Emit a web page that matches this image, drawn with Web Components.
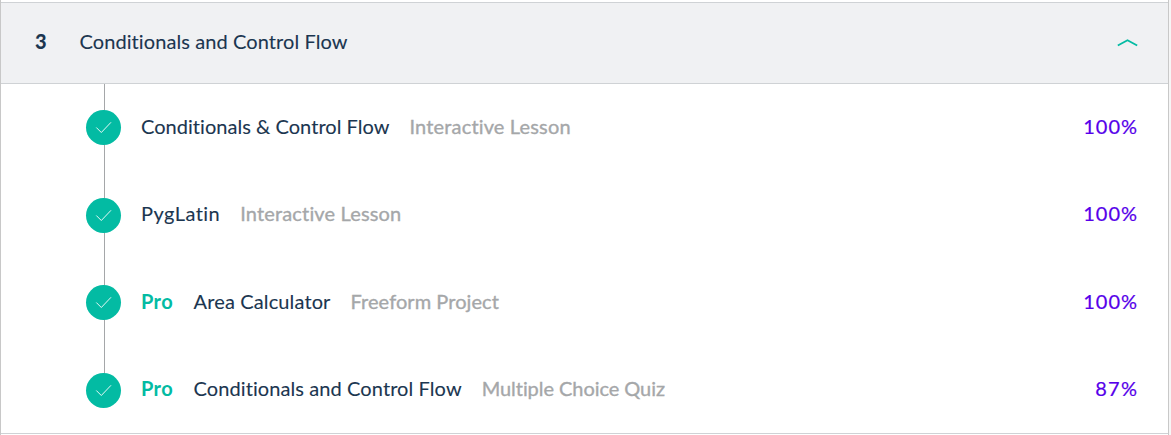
<!DOCTYPE html>
<html lang="en">
<head>
<meta charset="utf-8">
<title>Conditionals and Control Flow</title>
<style>
html,body{margin:0;height:100%;overflow:hidden}
body{background:#f6f6f6;font:20px/26px Lato,"Open Sans",sans-serif;font-variant-ligatures:none;color:#1b3650}
</style>
</head>
<body>
<course-module number="3" heading="Conditionals and Control Flow">
  <lesson-row name="Conditionals &amp; Control Flow" kind="Interactive Lesson" score="100%"></lesson-row>
  <lesson-row style="--name-track:.46px" name="PygLatin" kind="Interactive Lesson" score="100%"></lesson-row>
  <lesson-row style="--name-track:.13px;--kind-track:.07px" pro name="Area Calculator" kind="Freeform Project" score="100%"></lesson-row>
  <lesson-row style="--name-track:.09px;--kind-track:-.06px" pro last name="Conditionals and Control Flow" kind="Multiple Choice Quiz" score="87%"></lesson-row>
</course-module>
<script>
customElements.define('course-module', class extends HTMLElement {
  constructor() {
    super();
    this.attachShadow({mode: 'open'}).innerHTML = `
<style>
:host{display:block;box-sizing:border-box;width:1169px;height:435px;padding-top:2px;background:#fff;border:solid #c8c8c8;border-width:0 1px}
header{display:flex;align-items:center;box-sizing:border-box;height:82px;padding:0 30px 4px 34px;background:#f0f1f3;border:solid #cfd2d5;border-width:1px 0}
b{width:44.5px;font-weight:900}
span{letter-spacing:.09px;-webkit-text-stroke:.1px}
svg{margin-left:auto;margin-top:3px}
section{height:349px;border-bottom:1px solid #cfd2d5}
</style>
<header><b></b><span></span><svg width="21" height="9" fill="none" stroke="#03bba3" stroke-width="1.8"><path d="M.8 7.5 10.5 2.2l9.7 5.3"/></svg></header>
<section><slot></slot></section>`;
  }
  connectedCallback() {
    this.shadowRoot.querySelector('b').textContent = this.getAttribute('number');
    this.shadowRoot.querySelector('span').textContent = this.getAttribute('heading');
  }
});
customElements.define('lesson-row', class extends HTMLElement {
  constructor() {
    super();
    this.attachShadow({mode: 'open'}).innerHTML = `
<style>
:host{display:flex;box-sizing:border-box;height:87.5px;padding:0 31px 0 85px;align-items:center;background:linear-gradient(#a5a7a9,#a5a7a9) 103px 0/1px 100% no-repeat}
:host([last]){background-size:1px 50%}
i{display:block;width:35px;height:35px;border-radius:50%;background:#03bba3;margin-right:20px}
svg{display:block}
span{padding-bottom:4px;-webkit-text-stroke:.1px}
.pro{color:#03bba3;font-weight:700;margin-right:20.5px;letter-spacing:.4px;-webkit-text-stroke:0}
.name{letter-spacing:var(--name-track,.04px)}
.kind{color:#a5a7a9;margin-left:20px;letter-spacing:var(--kind-track,.16px);-webkit-text-stroke:.35px}
.score{color:#5600ea;margin-left:auto;letter-spacing:.95px;margin-right:-.95px;-webkit-text-stroke:.2px}
:host([last]) .score{letter-spacing:1.3px;margin-right:-1.3px}
</style>
<i><svg width="35" height="35" fill="none" stroke="#fff" stroke-width=".9"><path d="m10.3 17.5 5 5L25 12.3"/></svg></i>
<span class="pro">Pro</span><span class="name"></span><span class="kind"></span><span class="score"></span>`;
  }
  connectedCallback() {
    for (const key of ['name', 'kind', 'score'])
      this.shadowRoot.querySelector('.' + key).textContent = this.getAttribute(key);
    if (!this.hasAttribute('pro')) this.shadowRoot.querySelector('.pro').remove();
  }
});
</script>
</body>
</html>
